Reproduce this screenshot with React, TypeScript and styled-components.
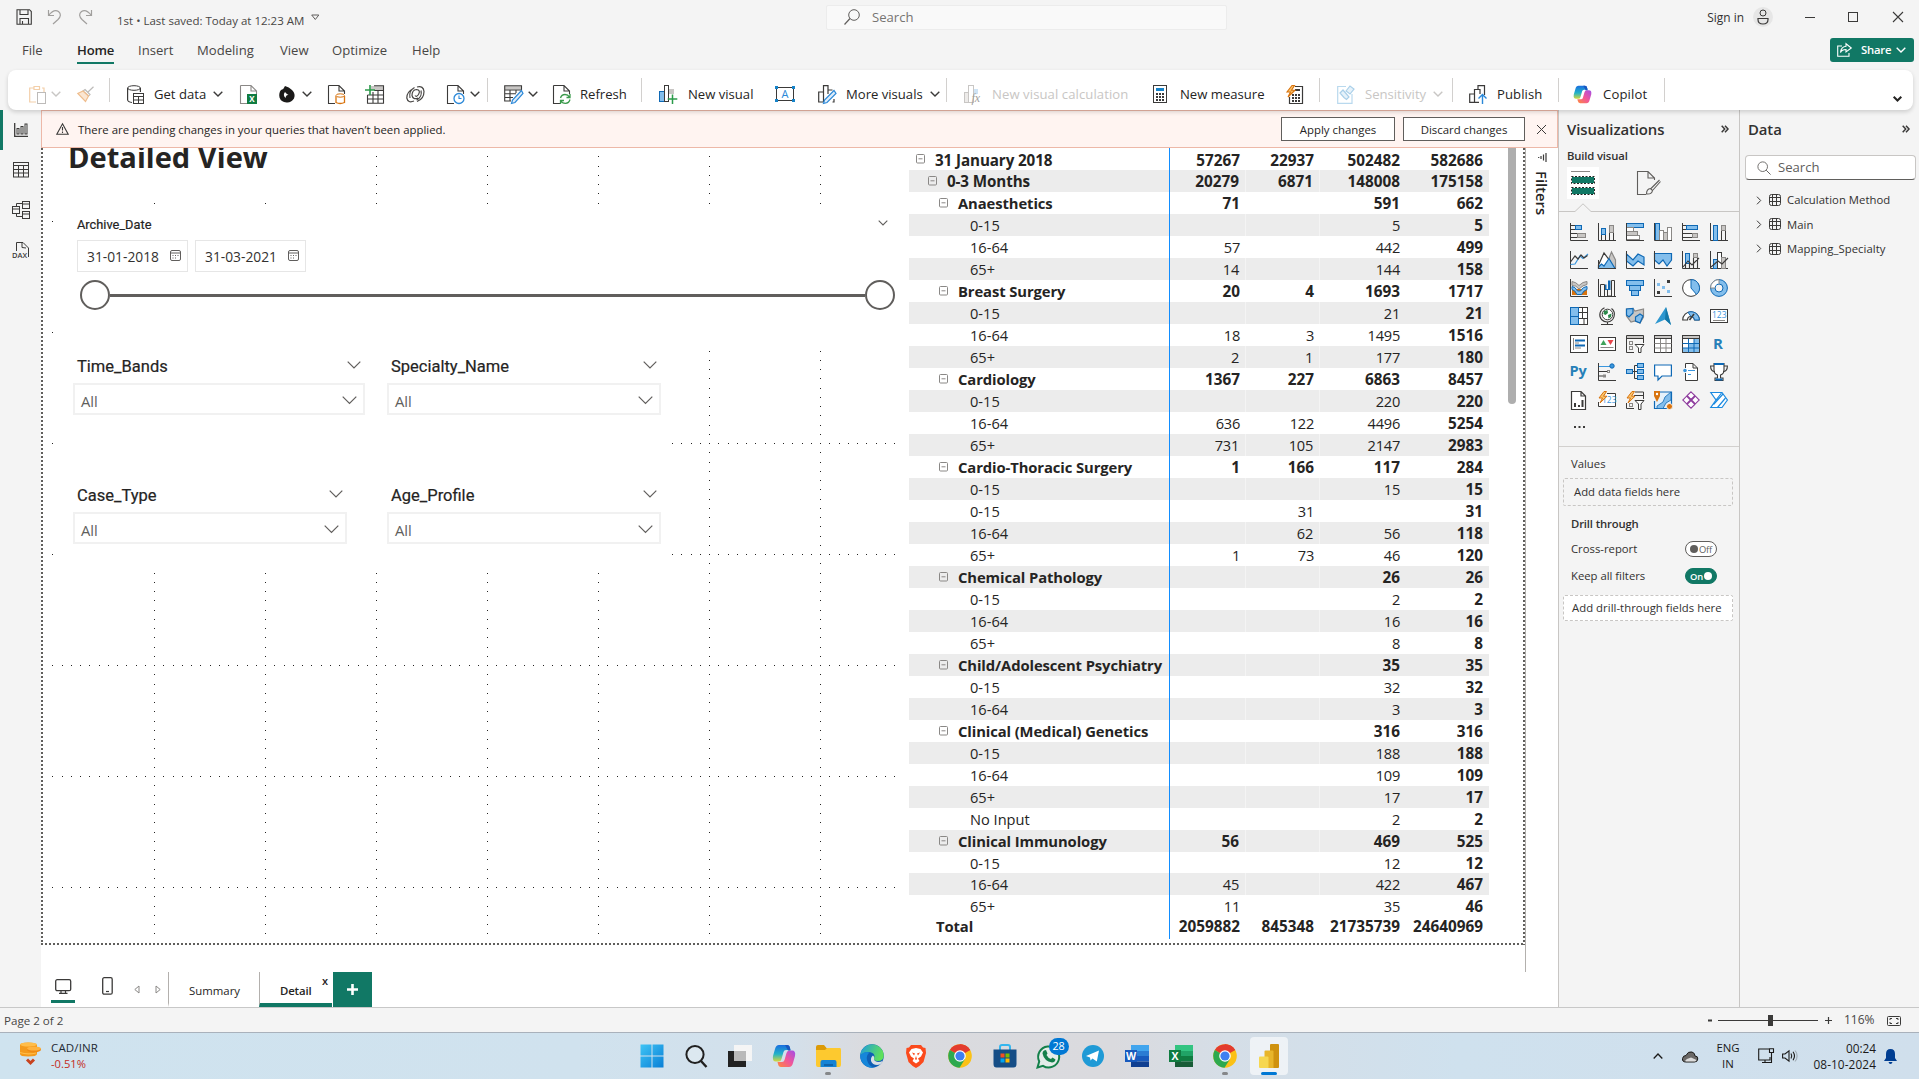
import React from "react";
import styled, { createGlobalStyle, css } from "styled-components";

const GlobalStyle = createGlobalStyle`
  * { box-sizing: border-box; }
  html, body { margin: 0; padding: 0; background: #f4f4f4; }
  body { font-family: "Open Sans", "Noto Sans", sans-serif; color: #323130; overflow: hidden; }
`;

const INK = "#3b3a39";
const BLUE = "#0f69b5";
const SKY = "#83beec";
const GREY = "#8a8886";
const SILVER = "#c8c6c4";
const GREEN = "#117865";

/* ---------- drawing helpers ---------- */

const Glyph = styled.svg`
  display: block;
  flex: none;
  overflow: visible;
`;

type IconProps = { w?: number; h?: number; vb?: string; children?: React.ReactNode };
const Icon = ({ w = 18, h = 18, vb, children }: IconProps) => (
  <Glyph width={w} height={h} viewBox={vb ?? `0 0 ${w} ${h}`} fill="none">
    {children}
  </Glyph>
);

type StrokeProps = { d: string; c?: string; f?: string; w?: number };
const S = ({ d, c = INK, f = "none", w = 1.2 }: StrokeProps) => (
  <path d={d} stroke={c} fill={f} strokeWidth={w} />
);
type RectProps = { x: number; y: number; w: number; h: number; c?: string; f?: string };
const R = ({ x, y, w, h, c = INK, f = "none" }: RectProps) => (
  <rect x={x} y={y} width={w} height={h} stroke={c} fill={f} strokeWidth={1} />
);

const Chevron = ({ w = 10, c = INK, sw = 1.4 }: { w?: number; c?: string; sw?: number }) => (
  <Icon w={w} h={w / 2 + 1} vb={`0 0 ${w} ${w / 2 + 1}`}>
    <S d={`M.7 .7L${w / 2} ${w / 2}L${w - 0.7} .7`} c={c} w={sw} />
  </Icon>
);

/* ---------- shell ---------- */

const Page = styled.div`
  width: 1919px;
  height: 1079px;
  display: flex;
  flex-direction: column;
  background: #f4f4f4;
  overflow: hidden;
`;

const Slot = styled.div<{ $w?: number; $gap?: number; $justify?: string; $ml?: number }>`
  display: flex;
  align-items: center;
  flex: none;
  width: ${(p) => (p.$w ? `${p.$w}px` : "auto")};
  gap: ${(p) => p.$gap ?? 0}px;
  margin-left: ${(p) => p.$ml ?? 0}px;
  justify-content: ${(p) => p.$justify ?? "flex-start"};
`;

const Text = styled.span<{ $size?: number; $weight?: number; $color?: string; $ls?: number; $drop?: number }>`
  font-size: ${(p) => p.$size ?? 11.3}px;
  font-weight: ${(p) => p.$weight ?? 400};
  color: ${(p) => p.$color ?? "#323130"};
  letter-spacing: ${(p) => p.$ls ?? 0}px;
  padding-top: ${(p) => p.$drop ?? 0}px;
  line-height: 1.2;
  white-space: nowrap;
`;

const TitleBar = styled.header`
  height: 34px;
  flex: none;
  display: flex;
  align-items: center;
  padding-left: 16px;
`;

const TitleSearch = styled.div`
  width: 401px;
  height: 25px;
  display: flex;
  align-items: center;
  gap: 12px;
  padding-left: 17px;
  background: #f9f9f9;
  border: 1px solid #ececec;
  border-radius: 2px;
`;

const Avatar = styled.div`
  width: 20px;
  height: 20px;
  border-radius: 50%;
  background: #e6e6e6;
  display: flex;
  align-items: center;
  justify-content: center;
`;

const MenuBar = styled.nav`
  height: 36px;
  flex: none;
  display: flex;
  padding: 4px 5px 0 22px;
`;

const MenuItem = styled.div<{ $w: number; $on?: boolean }>`
  width: ${(p) => p.$w}px;
  height: 26px;
  font-size: 13.1px;
  line-height: 25px;
  color: ${(p) => (p.$on ? "#252423" : "#484644")};
  font-weight: ${(p) => (p.$on ? 600 : 400)};
  letter-spacing: ${(p) => (p.$on ? -0.2 : 0)}px;
`;

const MenuLabel = styled.span<{ $on?: boolean }>`
  display: inline-block;
  height: 26px;
  border-bottom: ${(p) => (p.$on ? `2px solid ${GREEN}` : "0")};
`;

const ShareButton = styled.button`
  width: 84px;
  height: 24px;
  margin-left: auto;
  display: flex;
  align-items: center;
  border: 0;
  border-radius: 3px;
  background: ${GREEN};
  padding: 0 0 0 7px;
  font-family: inherit;
`;

const Ribbon = styled.div`
  height: 40px;
  flex: none;
  margin: 0 6px 0 8px;
  padding: 8px 0 0 21px;
  display: flex;
  align-items: flex-start;
  background: #fff;
  border-radius: 8px;
  box-shadow: 0 2px 4px rgba(0, 0, 0, 0.16);
  z-index: 2;
`;

const Tool = styled.div<{ $w: number; $gap?: number }>`
  width: ${(p) => p.$w}px;
  height: 32px;
  flex: none;
  display: flex;
  align-items: center;
  gap: ${(p) => p.$gap ?? 5}px;
`;

const Rule = styled.div<{ $mr: number }>`
  width: 1px;
  height: 24px;
  flex: none;
  background: #d2d0ce;
  margin-right: ${(p) => p.$mr}px;
`;

const Body = styled.div`
  display: flex;
  flex: none;
  height: 897px;
`;

const Rail = styled.aside`
  width: 41px;
  flex: none;
  display: flex;
  flex-direction: column;
`;

const RailItem = styled.div<{ $on?: boolean; $h: number }>`
  height: ${(p) => p.$h}px;
  display: flex;
  align-items: center;
  justify-content: center;
  border-left: 3px solid ${(p) => (p.$on ? GREEN : "transparent")};
  padding-right: 3px;
`;

const Main = styled.main`
  width: 1517px;
  flex: none;
  display: flex;
  flex-direction: column;
  background: #fff;
`;

const Banner = styled.div`
  height: 38px;
  flex: none;
  display: flex;
  align-items: center;
  padding-left: 14px;
  background: #fff4f1;
  border: 1px solid #edb8a8;
`;

const BannerButton = styled.button<{ $w: number }>`
  width: ${(p) => p.$w}px;
  height: 24px;
  padding: 2px 0 0;
  margin-right: 8px;
  border: 1px solid #605e5c;
  background: #fff;
  font: 400 11.4px/1.2 "Open Sans", sans-serif;
  color: #252423;
`;

const Workspace = styled.div`
  display: flex;
  height: 824px;
  flex: none;
`;

const Canvas = styled.section`
  position: relative;
  width: 1484px;
  flex: none;
  overflow: hidden;
`;

const dots = "#605e5c 0 2px, transparent 2px 4px";
const PageBounds = styled.div`
  position: absolute;
  left: 0;
  top: 0;
  width: 1484px;
  height: 797px;
  background:
    repeating-linear-gradient(to bottom, ${dots}) left top / 2px 100% no-repeat,
    repeating-linear-gradient(to bottom, ${dots}) right top / 2px 100% no-repeat,
    repeating-linear-gradient(to right, ${dots}) left bottom / 100% 2px no-repeat;
`;

const GridDots = styled.svg`
  position: absolute;
  left: 0;
  top: 0;
`;

const Visual = styled.div<{ $x: number; $y: number; $w: number; $h: number }>`
  position: absolute;
  left: ${(p) => p.$x}px;
  top: ${(p) => p.$y}px;
  width: ${(p) => p.$w}px;
  height: ${(p) => p.$h}px;
  background: #fff;
`;

const Heading = styled.h1`
  margin: -11px 0 0 24px;
  font-size: 29.1px;
  line-height: 40px;
  font-weight: 700;
  color: #252423;
  white-space: nowrap;
`;

const SlicerHead = styled.div<{ $size: number; $h: number }>`
  display: flex;
  justify-content: space-between;
  align-items: center;
  height: ${(p) => p.$h}px;
  font-family: Roboto, sans-serif;
  font-weight: 400;
  font-size: ${(p) => p.$size}px;
  color: #252423;
  -webkit-text-stroke: 0.2px #252423;
`;

const DateSlicer = styled.div`
  padding: 11px 8px 0 24px;
`;

const DateTitle = styled.span`
  padding-bottom: 2px;
`;

const DateRow = styled.div`
  display: flex;
  gap: 7px;
  padding-top: 5px;
`;

const DateBox = styled.div`
  width: 111px;
  height: 32px;
  border: 1px solid #e6e6e6;
  display: flex;
  align-items: center;
  justify-content: space-between;
  padding: 0 6px 0 9px;
`;

const CalendarSpot = styled.span`
  padding-bottom: 1px;
`;

const Slider = styled.div`
  display: flex;
  align-items: center;
  width: 815px;
  margin: 8px 0 0 3px;
`;

const Knob = styled.div`
  width: 30px;
  height: 30px;
  border: 2px solid #605e5c;
  border-radius: 50%;
  flex: none;
`;

const Track = styled.div`
  flex: 1;
  height: 3px;
  background: #605e5c;
`;

const DropSlicer = styled.div<{ $w: number }>`
  width: ${(p) => p.$w}px;
  margin-left: 20px;
`;

const DropBox = styled.div`
  height: 32px;
  border: 2px solid #f1f1f1;
  display: flex;
  align-items: center;
  justify-content: space-between;
  padding: 2px 6px 0 6px;
`;

/* ---------- matrix ---------- */

const Matrix = styled.div`
  position: absolute;
  left: 868px;
  top: 0;
  width: 608px;
  height: 790px;
  display: flex;
  background: #fff;
`;

const Rows = styled.div`
  width: 580px;
  display: flex;
  flex-direction: column;
`;

const Row = styled.div<{ $band: boolean; $h: number }>`
  display: grid;
  grid-template-columns: 261px 76px 74px 86px 83px;
  height: ${(p) => p.$h}px;
  flex: none;
  background: ${(p) => (p.$band ? "#ececec" : "#fff")};
`;

const cellFont = css<{ $bold?: boolean; $lh?: number }>`
  font-size: ${(p) => (p.$bold ? 15.3 : 14.6)}px;
  letter-spacing: ${(p) => (p.$bold ? 0 : -0.25)}px;
  font-weight: ${(p) => (p.$bold ? 700 : 400)};
  line-height: ${(p) => p.$lh ?? 23}px;
  color: #252423;
  white-space: nowrap;
`;

const RowLabel = styled.div<{ $bold?: boolean; $level: number; $lh?: number }>`
  ${cellFont}
  display: flex;
  height: 100%;
  gap: 10px;
  padding-left: ${(p) => [7, 19, 30, 61, 27][p.$level]}px;
  border-right: 1px solid #118dff;
  font-size: ${(p) => (p.$level < 2 ? 15.2 : p.$bold ? 14.8 : 14.6)}px;
  letter-spacing: ${(p) => (p.$bold ? -0.1 : 0)}px;
`;

const Toggle = styled.span`
  padding-top: 6px;
`;

const Cell = styled.div<{ $bold?: boolean; $edge?: boolean; $lh?: number }>`
  ${cellFont}
  text-align: right;
  padding-right: 6px;
  height: 100%;
  border-right: ${(p) => (p.$edge ? "1px solid #f4f4f4" : "0")};
`;

const ScrollThumb = styled.div`
  width: 8px;
  height: 256px;
  margin-left: 19px;
  border-radius: 0 0 4px 4px;
  background: #aeaeae;
`;

type RowData = [number, string, string, string, string, string];
const ROWS: RowData[] = [
  [0, "31 January 2018", "57267", "22937", "502482", "582686"],
  [1, "0-3 Months", "20279", "6871", "148008", "175158"],
  [2, "Anaesthetics", "71", "", "591", "662"],
  [3, "0-15", "", "", "5", "5"],
  [3, "16-64", "57", "", "442", "499"],
  [3, "65+", "14", "", "144", "158"],
  [2, "Breast Surgery", "20", "4", "1693", "1717"],
  [3, "0-15", "", "", "21", "21"],
  [3, "16-64", "18", "3", "1495", "1516"],
  [3, "65+", "2", "1", "177", "180"],
  [2, "Cardiology", "1367", "227", "6863", "8457"],
  [3, "0-15", "", "", "220", "220"],
  [3, "16-64", "636", "122", "4496", "5254"],
  [3, "65+", "731", "105", "2147", "2983"],
  [2, "Cardio-Thoracic Surgery", "1", "166", "117", "284"],
  [3, "0-15", "", "", "15", "15"],
  [3, "0-15", "", "31", "", "31"],
  [3, "16-64", "", "62", "56", "118"],
  [3, "65+", "1", "73", "46", "120"],
  [2, "Chemical Pathology", "", "", "26", "26"],
  [3, "0-15", "", "", "2", "2"],
  [3, "16-64", "", "", "16", "16"],
  [3, "65+", "", "", "8", "8"],
  [2, "Child/Adolescent Psychiatry", "", "", "35", "35"],
  [3, "0-15", "", "", "32", "32"],
  [3, "16-64", "", "", "3", "3"],
  [2, "Clinical (Medical) Genetics", "", "", "316", "316"],
  [3, "0-15", "", "", "188", "188"],
  [3, "16-64", "", "", "109", "109"],
  [3, "65+", "", "", "17", "17"],
  [3, "No Input", "", "", "2", "2"],
  [2, "Clinical Immunology", "56", "", "469", "525"],
  [3, "0-15", "", "", "12", "12"],
  [3, "16-64", "45", "", "422", "467"],
  [3, "65+", "11", "", "35", "46"],
];

const Collapse = () => (
  <Icon w={9} h={10}>
    <rect x={0.5} y={0.5} width={8} height={8.5} rx={1} stroke="#8a8886" />
    <S d="M2.5 4.8H6.5" c="#8a8886" w={1} />
  </Icon>
);

type MatrixRowProps = { data: RowData; band: boolean; h: number; lh?: number };
const MatrixRow = ({ data, band, h, lh }: MatrixRowProps) => {
  const [level, label, ...values] = data;
  const bold = level !== 3;
  return (
    <Row $band={band} $h={h}>
      <RowLabel $bold={bold} $level={level} $lh={lh}>
        {level < 3 && (
          <Toggle>
            <Collapse />
          </Toggle>
        )}
        {label}
      </RowLabel>
      {values.map((v, i) => (
        <Cell key={i} $bold={bold || i === 3} $edge={band && i < 2} $lh={lh}>
          {v}
        </Cell>
      ))}
    </Row>
  );
};

const rowHeight = (i: number) => {
  if (i === 0) return 22.4;
  if (i === 32) return 21.5;
  if (i === 34) return 18.5;
  return 21.985;
};

/* ---------- dotted snap grid ---------- */

const gridPath = () => {
  let d = "";
  const dot = (x: number, y: number) => {
    d += `M${Math.round(x)} ${Math.round(y)}h1v1h-1z`;
  };
  for (let j = 0; j < 7; j++)
    for (let i = 0; i < 92; i++) dot(11.3 + i * 9.25, 73 + j * 111);
  for (let j = 0; j < 7; j++)
    for (let i = -7; i < 78; i++) dot(113 + j * 111, 73 + i * 9.25);
  return d;
};
const GRID = gridPath();

/* ---------- side panes ---------- */

const FilterStrip = styled.aside`
  width: 33px;
  border-left: 1px solid #b3b0ad;
  padding-top: 5px;
  display: flex;
  flex-direction: column;
  align-items: center;
  gap: 9px;
`;

const VerticalText = styled.div`
  writing-mode: vertical-rl;
  font-size: 14.8px;
  line-height: 20px;
  font-weight: 600;
  color: #252423;
`;

const Pane = styled.aside<{ $w: number }>`
  width: ${(p) => p.$w}px;
  flex: none;
  border-left: 1px solid #c8c6c4;
  display: flex;
  flex-direction: column;
`;

const PaneHead = styled.div<{ $pl: number; $pr: number }>`
  height: 38px;
  display: flex;
  align-items: center;
  justify-content: space-between;
  padding: 0 ${(p) => p.$pr}px 0 ${(p) => p.$pl}px;
`;

const PaneSubhead = styled.div`
  height: 17px;
  display: flex;
  align-items: center;
  padding: 0 0 2px 8px;
`;

const BuildTabs = styled.div`
  display: flex;
  align-items: center;
  height: 32px;
  margin-top: 2px;
  padding-left: 8px;
  gap: 38px;
`;

const BuildTile = styled.div`
  width: 32px;
  height: 32px;
  background: #fff;
  display: flex;
  align-items: center;
  justify-content: center;
`;

const NotchLine = styled.div`
  height: 13px;
  padding-top: 4px;
`;

const VizGrid = styled.div`
  display: grid;
  grid-template-columns: repeat(6, 28px);
  grid-auto-rows: 28px;
  padding: 11px 0 0 11px;
  height: 207px;
`;

const Ellipsis = styled.div`
  height: 27px;
  padding: 7px 0 0 15px;
`;

const Divider = styled.div`
  height: 1px;
  background: #d2d0ce;
`;

const FieldBox = styled.div<{ $h: number; $mt: number; $fill?: string; $pl: number }>`
  width: 170px;
  height: ${(p) => p.$h}px;
  margin: ${(p) => p.$mt}px 0 0 4px;
  padding-left: ${(p) => p.$pl}px;
  border: 1px dashed #c8c6c4;
  border-radius: 2px;
  background: ${(p) => p.$fill ?? "transparent"};
  display: flex;
  align-items: center;
`;

const PaneRow = styled.div<{ $h: number; $lift?: number }>`
  height: ${(p) => p.$h}px;
  display: flex;
  align-items: center;
  justify-content: space-between;
  padding: 0 22px ${(p) => p.$lift ?? 0}px 12px;
`;

const Switch = styled.div<{ $on?: boolean }>`
  width: 32px;
  height: 16px;
  border-radius: 8px;
  border: 1px solid ${(p) => (p.$on ? GREEN : "#605e5c")};
  background: ${(p) => (p.$on ? GREEN : "#fff")};
  color: ${(p) => (p.$on ? "#fff" : "#605e5c")};
  display: flex;
  flex-direction: ${(p) => (p.$on ? "row-reverse" : "row")};
  align-items: center;
  justify-content: space-between;
  padding: 0 4px;
  font-size: 9.4px;
  font-weight: ${(p) => (p.$on ? 600 : 400)};
  letter-spacing: -0.2px;
`;

const SwitchDot = styled.i<{ $on?: boolean }>`
  width: 8px;
  height: 8px;
  border-radius: 50%;
  background: ${(p) => (p.$on ? "#fff" : "#605e5c")};
`;

const DataSearch = styled.div`
  height: 25px;
  margin: 7px 3px 0 5px;
  padding-left: 11px;
  display: flex;
  align-items: center;
  gap: 7px;
  background: #fff;
  border: 1px solid #c8c6c4;
  border-bottom-color: #605e5c;
  border-radius: 4px;
`;

const ListPad = styled.div`
  height: 8px;
`;

const TableItem = styled.div`
  height: 24.3px;
  display: flex;
  align-items: center;
  padding-left: 16px;
`;

/* ---------- page tabs, status, taskbar ---------- */

const PageTabs = styled.div`
  height: 35px;
  flex: none;
  display: flex;
`;

const LeadPad = styled.div`
  width: 10px;
`;

const DeviceTab = styled.div<{ $w: number; $on?: boolean }>`
  width: ${(p) => p.$w}px;
  height: 31px;
  flex: none;
  display: flex;
  align-items: center;
  justify-content: center;
  border-bottom: 3px solid ${(p) => (p.$on ? GREEN : "transparent")};
`;

const PageTab = styled.div<{ $w: number; $on?: boolean }>`
  position: relative;
  width: ${(p) => p.$w}px;
  height: 35px;
  border-left: 1px solid #b3b0ad;
  border-bottom: 4px solid ${(p) => (p.$on ? GREEN : "transparent")};
  padding-left: 20px;
  display: flex;
  align-items: center;
`;

const TabClose = styled.span`
  position: absolute;
  right: 4px;
  top: 1px;
  font-size: 11px;
  font-weight: 600;
  line-height: 16px;
  color: #252423;
`;

const AddTab = styled.div`
  width: 39px;
  height: 35px;
  margin-left: 1px;
  background: ${GREEN};
  display: flex;
  align-items: center;
  justify-content: center;
`;

const StatusBar = styled.footer`
  height: 25px;
  flex: none;
  display: flex;
  align-items: center;
  border-top: 1px solid #c8c8c8;
  padding: 1px 18px 0 4px;
`;

const ZoomTrack = styled.div`
  width: 100px;
  height: 1px;
  margin: 0 7px 0 6px;
  background: #3b3a39;
  display: flex;
  align-items: center;
  justify-content: center;
`;

const ZoomThumb = styled.div`
  width: 5px;
  height: 11px;
  margin-left: 5px;
  background: #3b3a39;
`;

const Taskbar = styled.footer`
  height: 47px;
  flex: none;
  display: flex;
  border-top: 1px solid #a9b1bb;
  background: linear-gradient(90deg, #cfe3ef 0, #d0e2ee 30%, #d3e0eb 41%, #dadbdf 45%, #dadade 58%, #d5dee7 64%, #cfe1ee 76%, #d0dfec 100%);
`;

const Widget = styled.div`
  width: 630px;
  display: flex;
  gap: 9px;
  padding: 7px 0 0 18px;
`;

const Stack = styled.div<{ $align?: string }>`
  display: flex;
  flex-direction: column;
  align-items: ${(p) => p.$align ?? "flex-start"};
  & > span { line-height: 16px; }
`;

const Apps = styled.div`
  width: 660px;
  display: flex;
`;

const App44 = styled.div`
  position: relative;
  width: 44.07px;
  height: 46px;
  display: flex;
  align-items: center;
  justify-content: center;
  flex: none;
`;

const AppTile = styled.div<{ $on?: boolean }>`
  width: 38px;
  height: 38px;
  border-radius: 4px;
  display: flex;
  align-items: center;
  justify-content: center;
  background: ${(p) => (p.$on ? "rgba(255,255,255,.6)" : "transparent")};
`;

const RunMark = styled.i<{ $on?: boolean }>`
  position: absolute;
  bottom: 4px;
  left: calc(50% - ${(p) => (p.$on ? 8 : 3)}px);
  width: ${(p) => (p.$on ? 16 : 6)}px;
  height: 3px;
  border-radius: 2px;
  background: ${(p) => (p.$on ? "#0078d4" : "#858789")};
`;

const Badge = styled.span`
  position: absolute;
  left: 22px;
  top: 5px;
  width: 20px;
  height: 17px;
  border-radius: 9px;
  background: #0078d4;
  color: #fff;
  font-size: 10.8px;
  line-height: 16px;
  text-align: center;
`;

const Tray = styled.div`
  margin-left: auto;
  display: flex;
  align-items: flex-start;
  padding-top: 7px;
`;

const TrayCell = styled.div<{ $w: number; $justify?: string; $mr?: number }>`
  width: ${(p) => p.$w}px;
  height: 32px;
  margin-right: ${(p) => p.$mr ?? 0}px;
  display: flex;
  align-items: center;
  justify-content: ${(p) => p.$justify ?? "flex-start"};
`;

const BellPad = styled.div`
  padding-left: 8px;
`;

/* ---------- visual gallery ---------- */

const AX = "M.5 0V17.5H18";
const bolt = "M6 .5L1 7H4.5L2 12L9 5.2H5.5L8.5 .5Z";
const ORANGE = "#d8730e";

const VIZ: React.ReactNode[] = [
  <><S d={AX} w={1} /><R x={0.5} y={2.5} w={5} h={4} /><R x={5.5} y={2.5} w={6} h={4} c={BLUE} f={SKY} /><R x={0.5} y={10.5} w={7} h={4} /><R x={7.5} y={10.5} w={8} h={4} c={GREY} f={SILVER} /></>,
  <><S d={AX} w={1} /><R x={3.5} y={11.5} w={4} h={6} /><R x={3.5} y={5.5} w={4} h={6} c={BLUE} f={SKY} /><R x={11.5} y={9.5} w={4} h={8} /><R x={11.5} y={2.5} w={4} h={7} c={GREY} f={SILVER} /></>,
  <><R x={0.5} y={0.5} w={17} h={4} c={BLUE} f={SKY} /><R x={0.5} y={4.5} w={7} h={4} c={GREY} f="#fff" /><R x={0.5} y={8.5} w={11} h={4} c={GREY} f={SILVER} /><R x={0.5} y={12.5} w={13} h={4} c={GREY} f="#fff" /><S d={AX} w={1} /></>,
  <><R x={1.5} y={0.5} w={4} h={17} c={BLUE} f={SKY} /><R x={5.5} y={7.5} w={4} h={10} c={GREY} f="#fff" /><R x={9.5} y={9.5} w={4} h={8} c={GREY} f={SILVER} /><R x={13.5} y={4.5} w={4} h={13} c={GREY} f="#fff" /><S d={AX} w={1} /></>,
  <><S d={AX} w={1} /><R x={0.5} y={2.5} w={4} h={4} /><R x={4.5} y={2.5} w={11} h={4} c={BLUE} f={SKY} /><R x={0.5} y={10.5} w={10} h={4} /><R x={10.5} y={10.5} w={5} h={4} c={GREY} f={SILVER} /></>,
  <><S d={AX} w={1} /><R x={3.5} y={2.5} w={4} h={15} c={BLUE} f={SKY} /><R x={11.5} y={7.5} w={4} h={10} /><R x={11.5} y={2.5} w={4} h={5} c={GREY} f={SILVER} /></>,
  <><S d={AX} w={1} /><S d="M.5 13.500L5 13L10 5L13 7.500L18 3" c="#3a96dd" /><S d="M.5 11L5 5L8 8L11 4L14 7L17.500 4.500" /></>,
  <><S d="M7 17L13.500 1L17.500 9V17Z" c={GREY} f={SILVER} /><S d="M.5 14L6 2L12 10V17H.5Z" f="#fff" /><S d="M.5 16L3.500 13L6 15L11 7.500L17 17.500H.5Z" c={BLUE} f={SKY} /><S d="M.5 9V17.500H18" w={1} /></>,
  <><S d="M.5 3L7 9L12 3L18 6V14L12 10L7 15L.5 10Z" c={BLUE} f={SKY} /><S d={AX} w={1} /></>,
  <><S d="M.5 2.500H17.500V9L13 15L9 9L5 13L.5 9Z" c={BLUE} f={SKY} /><S d={AX} w={1} /></>,
  <><S d={AX} w={1} /><R x={3.5} y={2.5} w={4} h={10} c={BLUE} f={SKY} /><R x={11.5} y={2.5} w={4} h={4} c={GREY} f={SILVER} /><S d="M3.500 17V13M7.500 17V12M11.500 17V7M15.500 17V7M1 16L6 10L10 14L17 7" w={1.1} /></>,
  <><S d={AX} w={1} /><R x={3.5} y={8.5} w={4} h={9} c={BLUE} f={SKY} /><R x={7.5} y={1.5} w={4} h={16} f="#fff" /><R x={11.5} y={6.5} w={4} h={11} c={GREY} f={SILVER} /><S d="M1 16L8 10L12 13L18 7" w={1.1} /></>,
  <><path d="M2 10H17V16H2Z" fill={ORANGE} /><S d="M2 2.500Q6 3 9 6.500Q13 2.500 17 2.500V5.500Q13 6 9 10Q6 6 2 6.500Z" c={GREY} f={SILVER} w={1} /><S d="M2 7.500Q5 7.500 7.500 12H10.500Q13 7.500 17 7.500V10.500Q14 11 11.500 15.500H7Q5 11 2 10.500Z" c={BLUE} f={SKY} w={1} /><S d={AX} w={1} /></>,
  <><S d={AX} w={1} /><S d="M2.500 17V5.500H6.500V17M9.500 17V10.500H6.500M9.500 17H13.500V1.500H16.500V17" w={1} /><path d="M7 5.500H8.500V10H10V1.500H12.500V11H7Z" fill={BLUE} /></>,
  <><R x={0.5} y={1.5} w={17} h={5} c={BLUE} f={SKY} /><R x={3.5} y={6.5} w={11} h={5} c={BLUE} f={SKY} /><R x={5.5} y={11.5} w={7} h={5} c={BLUE} f={SKY} /></>,
  <><S d={AX} w={1} /><path d="M3 4h3v3h-3zM8 7h3v3h-3zM13 11h3v3h-3z" fill={SKY} /><path d="M13 1h3v3h-3zM3 12h3v3h-3z" fill={INK} /></>,
  <><circle cx={9} cy={9} r={8.4} stroke={INK} fill="#fff" /><S d="M9 .6A8.400 8.400 0 0 1 14.500 15.400L9 9Z" c={BLUE} f={SKY} w={1} /></>,
  <><circle cx={9} cy={9} r={6.2} stroke={SKY} strokeWidth={4.4} /><circle cx={9} cy={9} r={8.4} stroke={BLUE} /><circle cx={9} cy={9} r={4} stroke={BLUE} /><path d="M2.500 9A6.500 6.500 0 0 1 9 2.500" stroke="#fff" strokeWidth={4.200} /><S d="M.5 9A8.400 8.400 0 0 1 9 .6V5M.5 9H5" c={GREY} w={1} /></>,
  <><R x={0.5} y={0.5} w={17} h={17} f="#fff" /><R x={0.5} y={0.5} w={8} h={9} c={BLUE} f={SKY} /><R x={0.5} y={9.5} w={8} h={8} c={BLUE} f={SKY} /><S d="M8.500 5.500H17M12.500 6V12M17 11.500H8.500M12.500 0V5.500M14 11.500V17" w={1} /></>,
  <><circle cx={9.500} cy={7.500} r={5.300} fill="#fff" stroke={INK} /><path d="M6 4L9.500 3L10 6L7.500 8L5.500 7ZM10 8L13.500 6.500L13 10L10.500 11.500Z" fill="#2b8a4b" /><S d="M13.500 1.500A7.600 7.600 0 0 1 9.500 15A8 8 0 0 1 3.500 12.500M9.500 15V17.500M3 17.500H15M6.500 .8A7.500 7.500 0 0 0 3.500 12.500" c={INK} w={1.1} /></>,
  <><S d="M.5 2L7 1.500L9 4L17.500 2V10L14 16L9 14L5 15L.5 9Z" c={GREY} f={SILVER} /><S d="M.5 2L7 1.500V6L3 10L.5 8ZM9.500 10L14 7L17 9L14 16L9.500 14Z" c={BLUE} f={SKY} /></>,
  <><path d="M12 0L1 17L11 12.500L17 18Z" fill="#2e97cf" /><path d="M12 0L11 12.500L17 18Z" fill="#1478a8" /></>,
  <><S d="M.7 13A8.300 8.300 0 0 1 17.300 13H12.500A3.500 3.500 0 0 0 5.500 13Z" f="#fff" w={1.1} /><S d="M6 5.300A8.300 8.300 0 0 1 17.300 13H12.500A3.500 3.500 0 0 0 9 9.500Z" c={BLUE} f={SKY} w={1} /><S d="M7.500 13L12 7" w={1.600} /></>,
  <><R x={0.5} y={2.5} w={17} h={13} f="#fff" /><text x={2} y={11} fontSize={8.500} fill="#3a96dd" fontFamily="Open Sans">123</text><S d="M3 13.500H15" c={GREY} w={1} /></>,
  <><R x={0.5} y={0.5} w={17} h={17} f="#fff" /><S d="M3.500 3V15" c={GREY} w={1} /><S d="M5 5.500H15M5 10.500H15" c={BLUE} w={2} /><S d="M5 8H9M5 13H11" c={GREY} w={1} /></>,
  <><R x={0.5} y={2.5} w={17} h={13} f="#fff" /><path d="M2.500 10L5.500 5L8.500 10Z" fill="#3fa35b" /><path d="M9.500 5H15.500L12.500 10Z" fill="#e8454b" /><S d="M2.500 12.500H15.500" c={GREY} w={1} /></>,
  <><S d="M8 17.500H.5V.5H17.500V8M.5 3.500H17.500" w={1} /><path d="M1 1H17V3H1Z" fill={SILVER} /><R x={3.5} y={6.5} w={3} h={3} c={GREY} /><R x={3.5} y={11.5} w={3} h={3} c={GREY} /><S d="M9 9.500H18L15 13V17.500H12.500V13Z" f="#fff" w={1} /></>,
  <><R x={0.5} y={0.5} w={17} h={17} f="#fff" /><path d="M1 1H17V3.500H1Z" fill={SILVER} /><S d="M.5 8.500H17.500M.5 13H17.500M6.500 4V17.500M12 4V17.500" c={GREY} w={1} /><S d="M0 3.500H18" w={1} /></>,
  <><R x={0.5} y={0.5} w={17} h={17} f="#fff" /><path d="M1 1H17V3.500H1Z" fill={SILVER} /><path d="M12 4H17V17H1V13H7V8.500H12Z" fill={SKY} /><S d="M6.500 4V17.500M12 4V17.500M.5 8.500H17.500M.5 13H17.500" c={BLUE} w={1} /><S d="M0 3.500H18" w={1} /></>,
  <text x={3} y={14} fontSize={15} fontWeight={700} fill="#2680b8" fontFamily="Open Sans">R</text>,
  <text x={-0.5} y={13} fontSize={14.500} fontWeight={700} fill="#2680b8" fontFamily="Open Sans">Py</text>,
  <><S d={AX} w={1} /><S d="M1 3.500H12" c="#3a96dd" w={1} /><circle cx={14} cy={3} r={2.200} fill="#3a96dd" stroke={BLUE} /><S d="M1 8.500H9M1 13H5" c={INK} w={1} /><R x={9.5} y={7.5} w={2} h={2} c={GREY} /><R x={5.5} y={12} w={2} h={2} c={GREY} /></>,
  <><S d="M6 8.500H11M8.500 2.500V15.500M8.500 2.500H12M8.500 15.500H12" c={INK} w={1} /><R x={0.5} y={6.5} w={6} h={4} c={BLUE} f={SKY} /><R x={11.5} y={0.5} w={6} h={4} c={BLUE} f={SKY} /><R x={11.5} y={6.5} w={6} h={4} c={BLUE} f={SKY} /><R x={11.5} y={12.5} w={6} h={4} c={BLUE} f={SKY} /></>,
  <S d="M.6 2H17.400V13H8L4 17V13H.6Z" c={BLUE} f="#fff" />,
  <><S d="M3.500 5V.5H11L15.500 5V17.500H3.500V10M11 .5V5H15.500" f="#fff" w={1} /><circle cx={3} cy={7.500} r={1.800} fill="#3a96dd" /><S d="M6 7.500H13M6 11.500H9" c="#3a96dd" w={1} /></>,
  <><S d="M4 .6H14V7Q14 11 10.500 12V15H13V17.500H5V15H7.500V12Q4 11 4 7Z" f="#fff" w={1.100} /><S d="M4 3H.6Q.6 8.500 5 8.500M14 3H17.400Q17.400 8.500 13 8.500" w={1.100} /><S d="M4 1H14M5.500 16.500H12.500" c={BLUE} w={2} /></>,
  <><S d="M1.500 .5H11L15.500 5V18.500H1.500ZM11 .5V5H15.500" f="#fff" w={1.200} /><path d="M4 12H6V16H4ZM8 14H10V16H8ZM11.500 9H13.500V16H11.500Z" fill={INK} /></>,
  <><S d="M9 2.500H17.500V15.500H.5V11" f="#fff" w={1} /><text x={4} y={12} fontSize={8.500} fill="#3a96dd" fontFamily="Open Sans">123</text><S d={bolt} c={ORANGE} f="#fbc56d" w={1} /></>,
  <><S d="M9 1H17.500V8M8 17.500H.5V12M8 4.500H17.500" w={1} /><R x={3.5} y={12.5} w={3} h={3} c={GREY} /><S d="M9 9.500H18L15 13V18.500H12.500V13Z" f="#fff" w={1} /><S d={bolt} c={ORANGE} f="#fbc56d" w={1} /></>,
  <><S d="M6 1H17.500V17.500H.5V10" c={BLUE} f="#e5f1fb" /><S d="M17 1L11 6L9 11L3 15V17.500H9L12 12L17 9Z" c={BLUE} f={SKY} w={0.800} /><path d="M0 0H6V5L3 11L0 5Z" fill={ORANGE} /><circle cx={3} cy={3} r={1.200} fill="#fff" /><circle cx={15.500} cy={15.500} r={3} fill={ORANGE} stroke="#fff" strokeWidth={0.8} /></>,
  <S d="M9 .8L12.800 4.600L9 8.400L5.200 4.600ZM4.600 5.200L8.400 9L4.600 12.800L.8 9ZM13.400 5.200L17.200 9L13.400 12.800L9.600 9ZM9 9.600L12.800 13.400L9 17.200L5.200 13.400Z" c="#8f3d9e" f="#fff" w={1.100} />,
  <><S d="M.8 1.500H12L17.400 9L12 16.500H.8L6 9Z" c="#1b8ae0" f="#fff" w={1.200} /><S d="M6 9L11.500 2M3.500 13.500L13 3M7.500 16.500L15.500 7" c="#1b8ae0" w={1.200} /></>,
];

/* ---------- app logos ---------- */

const CopilotLogo = ({ s = 20 }: { s?: number }) => (
  <Icon w={s} h={s} vb="0 0 24 24">
    <defs>
      <linearGradient id="cpA" x1="0" y1="0" x2="0" y2="1">
        <stop offset="0" stopColor="#1a6ee0" /><stop offset=".55" stopColor="#22b3c8" /><stop offset="1" stopColor="#d8d83a" />
      </linearGradient>
      <linearGradient id="cpB" x1="1" y1="0" x2="0" y2="1">
        <stop offset="0" stopColor="#a24de8" /><stop offset=".5" stopColor="#f0569a" /><stop offset="1" stopColor="#ff8a3c" />
      </linearGradient>
    </defs>
    <path d="M7 1H15Q17.500 1 18 4L18.500 6H14Q12 6 11.500 8L9.500 15Q9 17.500 6.500 17.500H4Q0 17.500 1 12L3 5Q4 1 7 1Z" fill="url(#cpA)" />
    <path d="M17 23H9Q6.500 23 6 20L5.500 18H10Q12 18 12.500 16L14.500 9Q15 6.500 17.500 6.500H20Q24 6.500 23 12L21 19Q20 23 17 23Z" fill="url(#cpB)" />
    <path d="M13 1H15Q17.500 1 18 4L18.500 6.500H16Z" fill="#1857c0" />
  </Icon>
);

const ChromeLogo = () => (
  <Icon w={24} h={24}>
    <circle cx={12} cy={12} r={11.800} fill="#fbc116" />
    <path d="M12 12L1.800 6.100A11.800 11.800 0 0 1 22.200 6.100Z" fill="#e33b2e" />
    <path d="M12 .2A11.800 11.800 0 0 1 22.200 6.200H12Z" fill="#e33b2e" />
    <path d="M1.800 6.100A11.800 11.800 0 0 0 11.500 23.800L17 15L12 12Z" fill="#2da94f" />
    <circle cx={12} cy={12} r={5.800} fill="#fff" />
    <circle cx={12} cy={12} r={4.600} fill="#3f7ff0" />
  </Icon>
);

const OfficeLogo = ({ letter, c }: { letter: string; c: string[] }) => (
  <Icon w={24} h={24}>
    <path d="M6 1H24V7H6Z" fill={c[0]} /><path d="M6 7H24V12H6Z" fill={c[1]} />
    <path d="M6 12H24V17.500H6Z" fill={c[2]} /><path d="M6 17.500H24V23H6Z" fill={c[3]} />
    <path d="M0 6H12V18H0Z" fill={c[4]} />
    <text x={6} y={15.800} fontSize={10.500} fontWeight={700} fill="#fff" textAnchor="middle" fontFamily="Open Sans">{letter}</text>
  </Icon>
);

const APPS: { logo: React.ReactNode; run?: boolean; on?: boolean; badge?: string }[] = [
  { logo: <Icon w={24} h={24}><defs><linearGradient id="win" x1="0" y1="0" x2="1" y2="1"><stop offset="0" stopColor="#3fc4f5" /><stop offset="1" stopColor="#0a7fd6" /></linearGradient></defs><path d="M.5 .5H11.500V11.500H.5ZM12.500 .5H23.500V11.500H12.500ZM.5 12.500H11.500V23.500H.5ZM12.500 12.500H23.500V23.500H12.500Z" fill="url(#win)" /></Icon> },
  { logo: <Icon w={24} h={24}><circle cx={11} cy={10.500} r={8.600} stroke="#202020" strokeWidth={2} fill="#dce8f0" /><path d="M17 17L22.500 23" stroke="#202020" strokeWidth={2.400} /></Icon> },
  { logo: <Icon w={24} h={24}><path d="M6 1H24V17H6Z" fill="#f5f5f5" /><path d="M0 7H18V23H0Z" fill="#222" /><path d="M6 7H18V17H6Z" fill="#b9b9b9" /></Icon> },
  { logo: <CopilotLogo s={24} /> },
  { run: true, logo: <Icon w={25} h={24}><path d="M0 3Q0 1 2 1H8L10.500 4H14V9H0Z" fill="#dc9a06" /><path d="M0 6H9L11 4H24Q25 4 25 6V21Q25 23 23 23H2Q0 23 0 21Z" fill="#fdc92f" /><path d="M4.500 23V18Q4.500 16 6.500 16H18.500Q20.500 16 20.500 18V23Z" fill="#1583d5" /><path d="M8 21H17" stroke="#0b5a9d" strokeWidth={1.500} /></Icon> },
  { logo: <Icon w={24} h={24}><defs><linearGradient id="edA" x1="0" y1="0" x2="1" y2="0.300"><stop offset="0" stopColor="#1e9be0" /><stop offset="1" stopColor="#5fe05a" /></linearGradient></defs><circle cx={12} cy={12} r={11.800} fill="#0f5fb5" /><path d="M.3 11A11.800 11.800 0 0 1 23.800 11Q24 17 17.500 17Q13.500 17 14 14Q15.500 11 12.500 9Q7 6 .3 11Z" fill="url(#edA)" /><path d="M.3 11Q5 6.500 9.500 8.500Q6 11 7 16Q8.500 22 14 23.600A11.800 11.800 0 0 1 .3 11Z" fill="#1686d9" /><path d="M14 14Q13.500 17.500 18 18Q21 18 23 16.500Q22 19 20 20.600Q13 22 11 17Q10.500 13 13 11.500Q14.500 12.500 14 14Z" fill="#d9dfe5" /></Icon> },
  { logo: <Icon w={20} h={24}><path d="M5 1H15L17 3.500L19.500 4L20 9L17.500 18Q14 22 10 24Q6 22 2.500 18L0 9L.5 4L3 3.500Z" fill="#fb4a1c" /><path d="M5.500 5L10 4L14.500 5L17 8.500L15 12.500L12 14.500L13.500 17L10 19.500L6.500 17L8 14.500L5 12.500L3 8.500Z" fill="#fff" /><path d="M6 8.500L9 9.500L8 11.500ZM14 8.500L11 9.500L12 11.500ZM10 12L9 15L10 16L11 15Z" fill="#fb4a1c" /></Icon> },
  { logo: <ChromeLogo /> },
  { logo: <Icon w={24} h={24}><path d="M7 6V3Q7 1 9 1H15Q17 1 17 3V6" stroke="#35b6ee" strokeWidth={2} /><path d="M.5 5.500H23.500V20Q23.500 23.500 20.500 23.500H3.500Q.5 23.500 .5 20Z" fill="#154d86" /><path d="M7.500 9.500H11.500V13.500H7.500Z" fill="#f25022" /><path d="M12.500 9.500H16.500V13.500H12.500Z" fill="#7fba00" /><path d="M7.500 14.500H11.500V18.500H7.500Z" fill="#00a4ef" /><path d="M12.500 14.500H16.500V18.500H12.500Z" fill="#ffb900" /></Icon> },
  { badge: "28", logo: <Icon w={25} h={25}><path d="M1.500 23.500L3.200 17.500A10.500 10.500 0 1 1 7 21.800Z" fill="#e3ece9" stroke="#14804a" strokeWidth={2} /><path d="M8 6.500L10 6L11.500 9.500L10.500 11Q12 14 15 15L16.500 13.500L19.500 15.500Q19 18.500 16 18.500Q8 17 6.500 9.500Q6.500 7.500 8 6.500Z" fill="#14804a" /></Icon> },
  { logo: <Icon w={22} h={22}><circle cx={11} cy={11} r={11} fill="#1f9ad6" /><path d="M4 11L17 5.500L14.800 16.500L10.500 13.500L8.500 15.500L8 12.500Z" fill="#fff" /></Icon> },
  { logo: <OfficeLogo letter="W" c={["#41a5ee", "#2b7cd3", "#185abd", "#103f91", "#185abd"]} /> },
  { logo: <OfficeLogo letter="X" c={["#33c481", "#21a366", "#107c41", "#185c37", "#107c41"]} /> },
  { run: true, logo: <ChromeLogo /> },
  { on: true, logo: <Icon w={20} h={24}><path d="M11 1Q11 0 12 0H19Q20 0 20 1V23Q20 24 19 24H11Z" fill="#cf920f" /><path d="M5.500 7.500Q5.500 6.500 6.500 6.500H13.500Q14.500 6.500 14.500 7.500V24H5.500Z" fill="#e8b52a" /><path d="M0 13.500Q0 12.500 1 12.500H8.500Q9.500 12.500 9.500 13.500V24H1Q0 24 0 23Z" fill="#f6d751" /></Icon> },
];

/* ---------- pieces ---------- */

const DOC = "M.5 .5H11L16.500 6V9M.5 .5V18.500H7M11 .5V6H16.500";

const Calendar = () => (
  <CalendarSpot>
    <Icon w={11} h={11}>
      <rect x={0.5} y={0.5} width={10} height={10} rx={1.500} stroke="#605e5c" />
      <S d="M.5 3H10.500" c="#605e5c" w={1} />
      <path d="M2.500 5h1v1h-1zM5 5h1v1h-1zM7.500 5h1v1h-1zM2.500 7.500h1v1h-1zM5 7.500h1v1h-1z" fill="#605e5c" />
    </Icon>
  </CalendarSpot>
);

const TitlePad = styled.span`
  padding: 0 0 2px 4px;
`;
const HeadChevron = styled.span`
  padding: 0 4px 5px 0;
`;
const CaseGap = styled.div`
  padding-top: 19px;
`;

const Dropdown = ({ title, w }: { title: string; w: number }) => (
  <DropSlicer $w={w}>
    <SlicerHead $size={16.5} $h={32}>
      <TitlePad>{title}</TitlePad>
      <HeadChevron><Chevron w={14} c="#605e5c" sw={1.200} /></HeadChevron>
    </SlicerHead>
    <DropBox>
      <Text $size={14.8} $color="#605e5c" $drop={3}>All</Text>
      <Chevron w={15} c="#605e5c" sw={1.200} />
    </DropBox>
  </DropSlicer>
);

const Magnifier = ({ s, c = "#605e5c", flip }: { s: number; c?: string; flip?: boolean }) => (
  <Icon w={s} h={s} vb="0 0 16 16">
    {flip ? (
      <><circle cx={6.500} cy={6.500} r={5.500} stroke={c} /><S d="M10.500 10.500L15.500 15.500" c={c} w={1.100} /></>
    ) : (
      <><circle cx={10} cy={6} r={5.300} stroke={c} /><S d="M6 9.500L.5 15.500" c={c} w={1.200} /></>
    )}
  </Icon>
);

const TitleText = styled.div`
  padding-top: 4px;
`;
const Pull = styled.div`
  padding: 0 9px 2px 0;
`;

const Title = () => (
  <TitleBar>
    <Slot $w={31}>
      <Icon w={16} h={16}><S d="M1 .7H13.500L15.300 2.500V15.300H1ZM4 .7V5.500H12V.7M4 15V9.500H12.500V15M6.500 12V15" w={1.100} /></Icon>
    </Slot>
    <Slot $w={31}>
      <Icon w={15} h={16}><S d="M1.500 1V6.500H7M1.500 6.500Q7 -.5 11.500 2.500Q15.500 6 11 10.500L6 15" c="#a19f9d" /></Icon>
    </Slot>
    <Slot $w={39}>
      <Icon w={15} h={16}><S d="M13.500 1V6.500H8M13.500 6.500Q8 -.5 3.500 2.500Q-.5 6 4 10.500L9 15" c="#a19f9d" /></Icon>
    </Slot>
    <Slot $w={194}>
      <TitleText><Text $size={11.5} $color="#484644">1st • Last saved: Today at 12:23 AM</Text></TitleText>
    </Slot>
    <Slot $w={515}>
      <Icon w={9} h={8}><S d="M.7 2H7.800L4.300 6.500Z" c="#605e5c" w={1} /></Icon>
    </Slot>
    <TitleSearch>
      <Magnifier s={16} />
      <Text $size={13.1} $color="#767472" $drop={1}>Search</Text>
    </TitleSearch>
    <Slot $w={526} $justify="flex-end"><Pull><Text $size={11.9}>Sign in</Text></Pull></Slot>
    <Slot $w={95} $gap={32}>
      <Avatar><Icon w={12} h={16}><circle cx={6} cy={4} r={3} stroke={INK} /><S d="M1 9.500H11V10.500Q11 15 6 15Q1 15 1 10.500Z" /></Icon></Avatar>
      <Icon w={10} h={10}><S d="M0 5.500H10" w={1} /></Icon>
    </Slot>
    <Slot $w={45}><Icon w={10} h={10}><R x={0.5} y={0.5} w={9} h={9} /></Icon></Slot>
    <Icon w={10} h={10}><S d="M0 0L10 10M10 0L0 10" w={1.100} /></Icon>
  </TitleBar>
);

const SpaceLeft = styled.span<{ $n: number }>`
  margin-left: ${(p) => p.$n}px;
`;
const Expand = styled.div`
  margin: 18px 11px 0 auto;
`;

const label = (t: string, c = "#252423", ls = 0) => (
  <Text $size={13.1} $color={c} $ls={ls} $drop={2}>{t}</Text>
);

const Toolbar = () => (
  <Ribbon>
    <Tool $w={48}>
      <Icon w={17} h={19}><S d="M5 3H.7V17H7M13 3H15V7M5 1.500H10.500V4.500H5Z" c="#f3cfa9" /><R x={8.5} y={7.5} w={8} h={11} c="#bdbbb9" f="#fff" /></Icon>
      <Chevron c="#c8c6c4" />
    </Tool>
    <Tool $w={32}>
      <Icon w={18} h={16}><S d="M16.500 .8L11 6M8 3.500L13 8.500L11.500 10L6 5Z" c="#bdbbb9" /><S d="M6 5L.8 7.500L8.500 15.500L11.500 10Z" c="#efbd8d" f="#fbe6d2" /></Icon>
    </Tool>
    <Rule $mr={17} />
    <Tool $w={113} $gap={10}>
      <Icon w={17} h={19}><ellipse cx={7} cy={3} rx={6.400} ry={2.300} stroke={INK} /><S d="M.6 3V15Q1 17 5 17.500M13.400 3V7" /><R x={6.5} y={8.5} w={10} h={10} f="#fff" /><S d="M6.500 11.500H16.500M6.500 15H16.500M11.500 11.500V18" w={1} /></Icon>
      {label("Get data")}
      <SpaceLeft $n={-3}><Chevron /></SpaceLeft>
    </Tool>
    <Tool $w={39}>
      <Icon w={18} h={19}><S d={DOC} c={GREY} w={1.100} /><path d="M7 9H17V19H7Z" fill="#107c41" /><text x={12} y={16.800} fontSize={8} fontWeight={700} fill="#fff" textAnchor="middle" fontFamily="Open Sans">X</text></Icon>
    </Tool>
    <Tool $w={49} $gap={7}>
      <Icon w={16} h={17}><path d="M6 0Q10 1 13 4Q17 8 15 12.500Q12 17 7.500 16.500Q2 16 .5 11.500Q-.5 7 2 4Q5 3 6 0Z" fill="#1b1a19" /><path d="M6 6Q3.500 9 6.500 12Q7 8.500 9.500 9Q7.500 8 6 6Z" fill="#fff" /></Icon>
      <Chevron />
    </Tool>
    <Tool $w={37}>
      <Icon w={18} h={19}><S d={DOC} w={1.100} /><S d="M8 11V17.500Q12 19.500 16.500 17.500V11" c={ORANGE} f="#fff" w={1.300} /><ellipse cx={12.200} cy={10.500} rx={4.200} ry={1.700} stroke={ORANGE} fill="#fff" /></Icon>
    </Tool>
    <Tool $w={41}>
      <Icon w={20} h={19}><path d="M6 1H18V5H6Z" fill={SILVER} /><S d="M9 .7H18.500V18.300H2.500V10M9 5.500H18.500M2.500 10H18.500M2.500 14H18.500M8 7V18M13 5V18" w={1.100} /><S d="M5 0V10M0 5H10" c="#2b9a4a" w={1.600} /></Icon>
    </Tool>
    <Tool $w={41}>
      <Icon w={19} h={17}><S d="M12 12Q7 14 6 9.500Q6 4 10.500 3.500Q15 4 12.500 8.500Q10.500 11.500 9 9.500M11 1Q17.500 -.5 18 5.500Q18 13 11 15.500M7.500 2.500Q.5 6 .8 12Q2 17.500 8 15M4 12Q2.500 4.500 8.500 1.500M15 4.500Q16.500 11 10.500 14" c="#484644" w={1.200} /></Icon>
    </Tool>
    <Tool $w={40}>
      <Icon w={18} h={19}><S d={DOC} w={1.100} /><circle cx={12} cy={13.500} r={5} stroke="#2b88d8" fill="#fff" strokeWidth={1.300} /><S d="M12 10.500V13.500H14.500" c="#2b88d8" w={1.100} /></Icon>
      <Chevron />
    </Tool>
    <Rule $mr={16} />
    <Tool $w={49}>
      <Icon w={19} h={19}><path d="M1 1H17V4.500H1Z" fill={SILVER} /><S d="M17.500 5V.7H.7V16H7M.7 5H17.500M.7 8.700H12M.7 12.500H9M6 5V16M12 5V8" w={1.100} /><S d="M17.500 5.500L8.500 15L7.500 18.500L11 17.500L19 8.500Z" c="#2b88d8" f="#deecf9" /></Icon>
      <Chevron />
    </Tool>
    <Tool $w={88} $gap={9}>
      <Icon w={18} h={19}><S d={DOC} w={1.100} /><S d="M7.500 13Q8.500 9.500 12 9.500Q15 9.500 16.500 12M17 9V12.500H13.500M17 14.500Q16 18.300 12.500 18.300Q9 18.300 8 16M7.500 19V15.500H11" c="#3a9a4b" w={1.300} /></Icon>
      {label("Refresh")}
    </Tool>
    <Rule $mr={17} />
    <Tool $w={116} $gap={11}>
      <Icon w={18} h={19}><R x={0.5} y={6.5} w={5} h={10} c={BLUE} f={SKY} /><R x={5.5} y={0.5} w={4} h={16} f="#fff" /><path d="M10 4H15V9H10Z" fill={SILVER} /><S d="M13.500 9.500V19M8.700 14H18.300" c="#2b9a4a" w={1.500} /></Icon>
      {label("New visual")}
    </Tool>
    <Tool $w={43}>
      <Icon w={20} h={16}><R x={1.5} y={1.5} w={17} h={13} f="#fff" /><path d="M0 0H3V3H0ZM17 0H20V3H17ZM0 13H3V16H0ZM17 13H20V16H17Z" fill="#1683c9" /><text x={10} y={12} fontSize={11} fill="#2b88d8" textAnchor="middle" fontFamily="Open Sans">A</text></Icon>
    </Tool>
    <Tool $w={128} $gap={10}>
      <Icon w={18} h={19}><S d="M5 17H.7V7H5.500M5.500 17V.7H10V9M10 5H14.500" /><S d="M14.500 17H16V14" /><S d="M16 5.500L6.500 15L5.500 18.500L9 17.500L18 8.500Z" c="#2b88d8" f="#deecf9" /></Icon>
      {label("More visuals")}
      <SpaceLeft $n={-3}><Chevron /></SpaceLeft>
    </Tool>
    <Rule $mr={17} />
    <Tool $w={189} $gap={10}>
      <Icon w={18} h={19}><R x={0.5} y={7.5} w={4} h={10} c="#c8c6c4" f="#edebe9" /><R x={4.5} y={0.5} w={5} h={17} c="#c8c6c4" f="#fff" /><path d="M10 4H14V9H10Z" fill="#cfe4f5" /><text x={7.500} y={17} fontSize={12} fontStyle="italic" fill="#a19f9d" fontFamily="Liberation Serif">fx</text></Icon>
      {label("New visual calculation", "#c8c6c4", 0.09)}
    </Tool>
    <Tool $w={133} $gap={12}>
      <Icon w={15} h={18}><R x={0.5} y={0.5} w={13} h={17} f="#fff" /><path d="M3 3H11V6H3Z" fill="#1683c9" /><path d="M3 8h2v2h-2zM6 8h2v2h-2zM9 8h2v2h-2zM3 11h2v2h-2zM6 11h2v2h-2zM9 11h2v2h-2zM3 14h2v2h-2zM6 14h2v2h-2zM9 14h2v2h-2z" fill={INK} /></Icon>
      {label("New measure")}
    </Tool>
    <Tool $w={33}>
      <Icon w={18} h={19}><S d="M9 1.500H16.500V18.500H3.500V12" /><S d="M9 5H14" w={2} /><path d="M6 9h2v2h-2zM9 9h2v2h-2zM12 9h2v2h-2zM6 12h2v2h-2zM9 12h2v2h-2zM12 12h2v2h-2zM6 15h2v2h-2zM9 15h2v2h-2zM12 15h2v2h-2z" fill={INK} /><S d={bolt} c={ORANGE} f="#fbc56d" w={1.100} /></Icon>
    </Tool>
    <Rule $mr={17} />
    <Tool $w={115} $gap={10}>
      <Icon w={18} h={19}><S d="M9 1.500H.7V18.300H15V9" c="#b9d9ee" /><S d="M3 8L6 5L12 12L9.500 14.500L7 12.500ZM9 6L13 1L17 4L13 9Z" c="#a9cfe9" f="#e6f2fa" /></Icon>
      {label("Sensitivity", "#c8c6c4")}
      <SpaceLeft $n={-3}><Chevron c="#c8c6c4" /></SpaceLeft>
    </Tool>
    <Rule $mr={16} />
    <Tool $w={89} $gap={9}>
      <Icon w={19} h={19}><S d="M.7 9H5.500V17.300H.7ZM5.500 17.300V4.500H11V9M9 4V.7H15.500V10M5.500 17.300H10" /><S d="M13.500 19V10M9.500 13.500L13.500 9.500L17.500 13.500" c="#2b88d8" w={1.400} /></Icon>
      {label("Publish", "#252423", 0.1)}
    </Tool>
    <Rule $mr={14} />
    <Tool $w={91} $gap={11}>
      <CopilotLogo s={19} />
      {label("Copilot", "#252423", 0.15)}
    </Tool>
    <Rule $mr={0} />
    <Expand><Chevron w={9} c="#252423" sw={2} /></Expand>
  </Ribbon>
);

const Collapser = () => (
  <Icon w={8} h={8}><S d="M.7 .7L3.700 4L.7 7.300M4 .7L7 4L4 7.300" w={1.500} /></Icon>
);

const TableIcon = () => (
  <Icon w={12} h={12}>
    <rect x={0.500} y={0.500} width={11} height={11} rx={2} stroke={INK} strokeWidth={1} />
    <S d="M3.500 .5V11.500M7.500 .5V11.500M.5 3.500H11.500M.5 7.500H11.500" w={1} />
  </Icon>
);

export default function App() {
  return (
    <Page>
      <GlobalStyle />
      <Title />
      <MenuBar>
        <MenuItem $w={55}>File</MenuItem>
        <MenuItem $w={61} $on><MenuLabel $on>Home</MenuLabel></MenuItem>
        <MenuItem $w={59}>Insert</MenuItem>
        <MenuItem $w={83}>Modeling</MenuItem>
        <MenuItem $w={52}>View</MenuItem>
        <MenuItem $w={80}>Optimize</MenuItem>
        <MenuItem $w={60}>Help</MenuItem>
        <ShareButton>
          <Slot $w={24}>
            <Icon w={15} h={14}><S d="M5 3H.7V13.300H12V10M9 .7L14.300 5L9 9V6.500Q5 6.500 3.500 9.500Q4 4 9 3.300Z" c="#fff" w={1.100} /></Icon>
          </Slot>
          <Slot $w={35}><Text $size={11.3} $weight={600} $color="#fff" $ls={-0.2}>Share</Text></Slot>
          <Chevron w={10} c="#fff" />
        </ShareButton>
      </MenuBar>
      <Toolbar />
      <Body>
        <Rail>
          <RailItem $h={40} $on><Icon w={14} h={14}><S d="M.7 0V13.300H14" w={1.300} /><R x={3} y={5.5} w={2} h={5.500} /><R x={7} y={3.500} w={2} h={7.500} /><R x={11} y={1} w={2} h={10} /></Icon></RailItem>
          <RailItem $h={40}><Icon w={16} h={16}><R x={0.5} y={0.5} w={15} h={14.500} /><S d="M.5 3.500H15.500M.5 7.500H15.500M.5 11H15.500M5.500 3.500V15M10.500 3.500V15" w={1} /></Icon></RailItem>
          <RailItem $h={40}><Icon w={18} h={18}><R x={0.5} y={5.500} w={7} h={7} /><S d="M.5 8H7.500" w={1} /><R x={10.500} y={0.5} w={7} h={7} /><S d="M10.500 3H17.500" w={1} /><R x={10.500} y={10.500} w={7} h={7} /><S d="M10.500 13H17.500M4.500 5.500V2.500H10.500M4.500 12.500V15.500H10.500" w={1} /></Icon></RailItem>
          <RailItem $h={40}><Icon w={18} h={17}><S d="M4.500 9V.5H11L16.500 6V15M10 .5V5.500L14 6" w={1} /><text x={0} y={16} fontSize={7.500} fontWeight={600} fill={INK} fontFamily="Open Sans">DAX</text></Icon></RailItem>
        </Rail>
        <Main>
          <Banner>
            <Slot $w={22}>
              <Icon w={13} h={12}><S d="M6.500 .8L12.200 11.300H.8ZM6.500 4V7.500M6.500 8.500V10" w={1.100} /></Icon>
            </Slot>
            <Slot $w={1203}><Text $size={11.4} $color="#252423" $drop={2}>There are pending changes in your queries that haven’t been applied.</Text></Slot>
            <BannerButton $w={114}>Apply changes</BannerButton>
            <BannerButton $w={122}>Discard changes</BannerButton>
            <Slot $w={16} $justify="center"><Icon w={9} h={9}><S d="M0 0L9 9M9 0L0 9" w={1} /></Icon></Slot>
          </Banner>
          <Workspace>
            <Canvas>
              <GridDots width={1484} height={824}><path d={GRID} fill="#252423" shapeRendering="crispEdges" /></GridDots>
              <Visual $x={3} $y={0} $w={325} $h={54}><Heading>Detailed View</Heading></Visual>
              <Visual $x={12} $y={57} $w={847} $h={145}>
                <DateSlicer>
                  <SlicerHead $size={12.8} $h={19}>
                    <DateTitle>Archive_Date</DateTitle>
                    <HeadChevron><Chevron w={10} c="#605e5c" sw={1.100} /></HeadChevron>
                  </SlicerHead>
                  <DateRow>
                    <DateBox><Text $size={13.8} $drop={2}>31-01-2018</Text><Calendar /></DateBox>
                    <DateBox><Text $size={13.8} $drop={2}>31-03-2021</Text><Calendar /></DateBox>
                  </DateRow>
                  <Slider><Knob /><Track /><Knob /></Slider>
                </DateSlicer>
              </Visual>
              <Visual $x={12} $y={203} $w={318} $h={110}><Dropdown title="Time_Bands" w={292} /></Visual>
              <Visual $x={326} $y={203} $w={304} $h={110}><Dropdown title="Specialty_Name" w={274} /></Visual>
              <Visual $x={12} $y={313} $w={306} $h={111}><CaseGap><Dropdown title="Case_Type" w={274} /></CaseGap></Visual>
              <Visual $x={326} $y={313} $w={304} $h={111}><CaseGap><Dropdown title="Age_Profile" w={274} /></CaseGap></Visual>
              <Matrix>
                <Rows>
                  {ROWS.map((r, i) => (
                    <MatrixRow key={i} data={r} band={i % 2 === 1} h={rowHeight(i)} lh={i === 0 ? 25 : 23} />
                  ))}
                  <MatrixRow data={[4, "Total", "2059882", "845348", "21735739", "24640969"]} band={false} h={23} lh={25} />
                </Rows>
                <ScrollThumb />
              </Matrix>
              <PageBounds />
            </Canvas>
            <FilterStrip>
              <Icon w={9} h={9}><S d="M8 0V9M5.500 1.500V7.500M3 3V6M.7 4V5" w={1.200} /></Icon>
              <VerticalText>Filters</VerticalText>
            </FilterStrip>
          </Workspace>
          <PageTabs>
            <LeadPad />
            <DeviceTab $w={24} $on><Icon w={17} h={15}><rect x={0.700} y={0.700} width={15} height={11} rx={1.500} stroke={INK} strokeWidth={1.300} /><S d="M4 14.300H12.500M6 12V14M10.500 12V14" /></Icon></DeviceTab>
            <DeviceTab $w={64}><Icon w={11} h={18}><rect x={0.700} y={0.700} width={9.500} height={16.500} rx={1.500} stroke={INK} strokeWidth={1.300} /><S d="M4 14.500H7" /></Icon></DeviceTab>
            <Slot $w={34} $gap={15} $ml={-5}>
              <Icon w={6} h={9}><S d="M5 1V8L.8 4.500Z" c={GREY} w={1} /></Icon>
              <Icon w={6} h={9}><S d="M1 1V8L5.200 4.500Z" c={GREY} w={1} /></Icon>
            </Slot>
            <PageTab $w={91}><Text $size={11.4} $color="#252423" $drop={7}>Summary</Text></PageTab>
            <PageTab $w={73} $on><Text $size={11.4} $weight={600} $color="#252423" $ls={-0.15} $drop={7}>Detail</Text><TabClose>x</TabClose></PageTab>
            <AddTab><Icon w={11} h={11}><S d="M5.500 0V11M0 5.500H11" c="#fff" w={2.600} /></Icon></AddTab>
          </PageTabs>
        </Main>
        <Pane $w={181}>
          <PaneHead $pl={8} $pr={10}><Text $size={14.9} $weight={600} $ls={-0.1} $drop={2}>Visualizations</Text><Collapser /></PaneHead>
          <PaneSubhead><Text $size={11.3} $weight={600} $ls={-0.15}>Build visual</Text></PaneSubhead>
          <BuildTabs>
            <BuildTile>
              <Icon w={24} h={24}><S d="M0 .5H19" c={GREY} w={1} /><path d="M1 6H23V12H1ZM1 17H23V23H1Z" fill={GREEN} /><path d="M.5 5.500H23.500V12.500H.5ZM.5 16.500H23.500V23.500H.5Z" stroke="#252423" strokeDasharray="2 1.500" /></Icon>
            </BuildTile>
            <Icon w={24} h={24}><S d="M9 23.500H.5V.5H11L17.500 7V9M11 .5V7H17.500M22.500 9L13.500 18M23.500 10.500L15.500 19.500M13.500 17.500Q9.500 18 9.500 23Q15 23.500 15.500 19.500Z" c="#605e5c" w={1.100} /></Icon>
          </BuildTabs>
          <NotchLine><Icon w={180} h={9}><S d="M0 8.500H16L24 .8L32 8.500H180" c="#c8c6c4" w={1} /></Icon></NotchLine>
          <VizGrid>{VIZ.map((v, i) => <Icon key={i} w={18} h={19} vb="0 0 18 19">{v}</Icon>)}</VizGrid>
          <Ellipsis><Icon w={12} h={3}><path d="M0 0h2v2h-2zM4.500 0h2v2h-2zM9 0h2v2h-2z" fill={INK} /></Icon></Ellipsis>
          <Divider />
          <PaneRow $h={34}><Text>Values</Text></PaneRow>
          <FieldBox $h={28} $mt={-3} $pl={10}><Text $ls={0.03}>Add data fields here</Text></FieldBox>
          <PaneRow $h={36} $lift={1}><Text $weight={600} $ls={-0.15}>Drill through</Text></PaneRow>
          <PaneRow $h={14}><Text>Cross-report</Text><Switch><SwitchDot />Off</Switch></PaneRow>
          <PaneRow $h={40}><Text>Keep all filters</Text><Switch $on><SwitchDot $on />On</Switch></PaneRow>
          <FieldBox $h={26} $mt={-1} $fill="#fff" $pl={8}><Text $ls={0.05}>Add drill-through fields here</Text></FieldBox>
        </Pane>
        <Pane $w={180}>
          <PaneHead $pl={8} $pr={9}><Text $size={14.9} $weight={600} $ls={-0.1} $drop={2}>Data</Text><Collapser /></PaneHead>
          <DataSearch><Magnifier s={14} flip /><Text $size={13.1} $color="#605e5c">Search</Text></DataSearch>
          <ListPad />
          {["Calculation Method", "Main", "Mapping_Specialty"].map((t) => (
            <TableItem key={t}>
              <Slot $w={13}><Icon w={6} h={9}><S d="M1 .7L4.700 4.500L1 8.300" w={1} /></Icon></Slot>
              <Slot $w={18}><TableIcon /></Slot>
              <Text $ls={0.05}>{t}</Text>
            </TableItem>
          ))}
        </Pane>
      </Body>
      <StatusBar>
        <Slot $w={1704}><Text $size={11.6} $color="#484644">Page 2 of 2</Text></Slot>
        <Slot><Icon w={4} h={3}><path d="M0 .5H4V2.500H0Z" fill={INK} /></Icon></Slot>
        <ZoomTrack><ZoomThumb /></ZoomTrack>
        <Slot $w={19}><Icon w={7} h={7} vb="0 0 7 7"><S d="M3.500 0V7M0 3.500H7" w={1.200} /></Icon></Slot>
        <Slot $w={43}><Text $size={12} $color="#484644">116%</Text></Slot>
        <Icon w={14} h={10}><rect x={0.500} y={0.500} width={13} height={9} rx={1} stroke={INK} /><S d="M5 2.500H3V4M3 6V7.500H5M9 2.500H11V4M11 6V7.500H9" w={1} /></Icon>
      </StatusBar>
      <Taskbar>
        <Widget>
          <Icon w={24} h={26}>
            <path d="M2 5Q2 2.500 10 2.500Q19 2.500 19 5V14Q19 16.500 10 16.500Q2 16.500 2 14Z" fill="#f49a1c" />
            <ellipse cx={10.500} cy={4.500} rx={8.500} ry={2} fill="#ffbd4a" />
            <ellipse cx={16} cy={9.500} rx={7} ry={3} fill="#f08a12" /><ellipse cx={16} cy={8.500} rx={7} ry={2} fill="#ffb23e" />
            <S d="M2 12.500Q9 15 18 13" c="#ffbd4a" />
            <S d="M9 19.500L12.500 23L16 19.500" c="#c8431f" w={3} />
          </Icon>
          <Stack><Text $size={11.5} $color="#1f2a33" $ls={0.15}>CAD/INR</Text><Text $size={11.2} $color="#c42b1c">-0.51%</Text></Stack>
        </Widget>
        <Apps>
          {APPS.map((a, i) => (
            <App44 key={i}>
              <AppTile $on={a.on}>{a.logo}</AppTile>
              {(a.run || a.on) && <RunMark $on={a.on} />}
              {a.badge && <Badge>{a.badge}</Badge>}
            </App44>
          ))}
        </Apps>
        <Tray>
          <TrayCell $w={29}><Icon w={10} h={6}><S d="M.7 5.500L5 1L9.300 5.500" c="#1b1a19" w={1.300} /></Icon></TrayCell>
          <TrayCell $w={27}><Icon w={16} h={11}><path d="M4 11Q0 11 .5 7.500Q1 4.500 4 4.500Q6 0 10 1Q13 2 13 5Q16 5 15.800 8Q15.500 11 12.500 11Z" fill="#6b6967" stroke="#1b1a19" /><path d="M4 10.500Q2 10 5 8L9 6.500L14.500 9Q14 10.500 12.500 10.500Z" fill="#ddd" /></Icon></TrayCell>
          <TrayCell $w={38} $mr={11} $justify="center"><Stack $align="center"><Text $size={11.4} $color="#1b1a19">ENG</Text><Text $size={11.4} $color="#1b1a19">IN</Text></Stack></TrayCell>
          <TrayCell $w={24}><Icon w={17} h={16}><S d="M11 1H.7V12H12V9M4 14.500H10M7 12V14.500M11.500 .8H15.500V4.500H11.500ZM13.500 4.500V14.500H10" c="#1b1a19" w={1.100} /></Icon></TrayCell>
          <TrayCell $w={28}><Icon w={16} h={12}><S d="M.6 4H3L7 .8V11.200L3 8H.6ZM9 3.500Q10.500 6 9 8.500M11 1.800Q14 6 11 10.200" c="#1b1a19" w={1.100} /><S d="M13.200 .5Q17 6 13.200 11.500" c="#9aa5ad" w={1} /></Icon></TrayCell>
          <TrayCell $w={66} $justify="flex-end"><Stack $align="flex-end"><Text $size={11.8} $color="#1b1a19">00:24</Text><Text $size={11.8} $color="#1b1a19" $ls={0.1}>08-10-2024</Text></Stack></TrayCell>
          <TrayCell $w={43}><BellPad><Icon w={13} h={15}><path d="M6.500 0Q11 0 11 5V9L13 12H0L2 9V5Q2 0 6.500 0ZM4.500 13H8.500Q8 15 6.500 15Q5 15 4.500 13Z" fill="#003e92" /></Icon></BellPad></TrayCell>
        </Tray>
      </Taskbar>
    </Page>
  );
}
